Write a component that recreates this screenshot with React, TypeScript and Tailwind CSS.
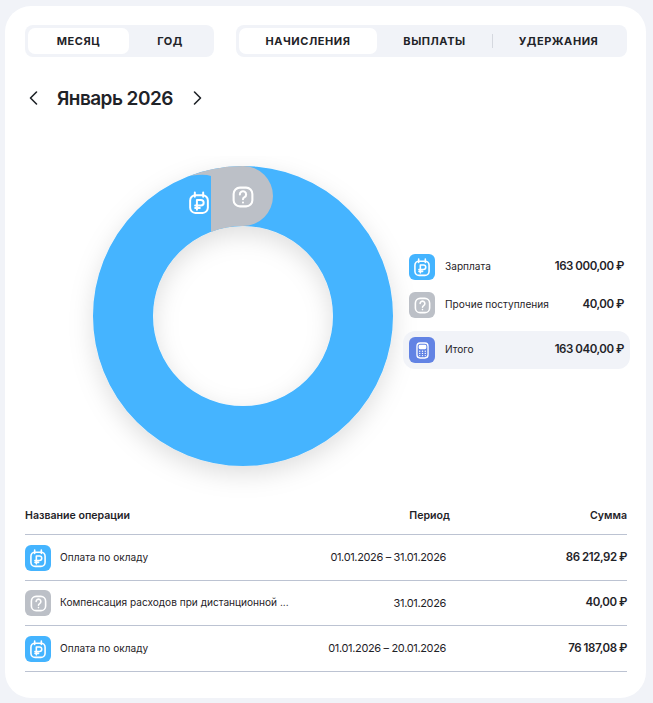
const F = `font-['Inter','Liberation_Sans',sans-serif]`;
type G = React.SVGProps<SVGSVGElement>;
import React from "react";
function SalaryGlyph(p: G) {
  return (
    <svg viewBox="0 0 24 24" fill="none" stroke="white" strokeWidth="1.9" strokeLinecap="round" strokeLinejoin="round" {...p}>
      <rect x="3.5" y="5" width="17" height="17" rx="5" />
      <path d="M8 2.5V6.5M16 2.5V6.5" />
      <path d="M10 19V9.5H13.8a2.7 2.7 0 0 1 0 5.4H8.3M8.3 17.2H12.8" />
    </svg>
  );
}
function HelpGlyph(p: G) {
  return (
    <svg viewBox="0 0 24 24" fill="none" stroke="white" strokeWidth="2" strokeLinecap="round" strokeLinejoin="round" {...p}>
      <rect x="3" y="3" width="18" height="18" rx="6" />
      <path d="M9 9.5a3 3 0 1 1 4.5 2.6c-1 .6-1.5 1-1.5 2" />
      <path d="M12 17.2v.01" />
    </svg>
  );
}
function CalcGlyph(p: G) {
  return (
    <svg viewBox="0 0 24 24" fill="none" stroke="white" strokeWidth="1.7" strokeLinecap="round" strokeLinejoin="round" {...p}>
      <rect x="5" y="2.5" width="14" height="19" rx="4" />
      <rect x="8" y="5.5" width="8" height="4" rx="1" fill="white" />
      <path d="M8.5 13v.01M12 13v.01M15.5 13v.01M8.5 15.7v.01M12 15.7v.01M15.5 15.7v.01M8.5 18.4v.01M12 18.4v.01M15.5 18.4v.01" />
    </svg>
  );
}
function Badge({ kind }: { kind: "salary" | "help" | "calc" }) {
  const bg = kind === "salary" ? "bg-[#44b4ff]" : kind === "help" ? "bg-[#bcc0c7]" : "bg-[#6283e4]";
  return (
    <div className={`flex h-[26px] w-[26px] shrink-0 items-center justify-center rounded-[6px] ${bg}`}>
      {kind === "salary" && <SalaryGlyph className="h-[20px] w-[20px]" />}
      {kind === "help" && <HelpGlyph className="h-[19px] w-[19px]" />}
      {kind === "calc" && <CalcGlyph className="h-[19px] w-[19px]" />}
    </div>
  );
}
function Donut() {
  return (
    <svg viewBox="-30 -10 360 350" className="-ml-[30px] h-[350px] w-[360px] shrink-0">
      <defs>
        <filter id="sh" x="-50%" y="-50%" width="200%" height="200%">
          <feDropShadow dx="0" dy="8" stdDeviation="12" floodColor="#000" floodOpacity="0.13" />
        </filter>
      </defs>
      <circle cx="150" cy="150" r="120" fill="none" stroke="#44b4ff" strokeWidth="60" filter="url(#sh)" />
      <path d="M118 3.45 A150 150 0 0 1 150 0 A30 30 0 0 1 150 60 A90 90 0 0 0 118 65.9 Z" fill="#bcc0c7" />
      <path d="M97 9.7 A150 150 0 0 1 118 3.45 L118 10 Q112 7.5 97 9.7 Z" fill="#bcc0c7" />
      <SalaryGlyph x="93.5" y="24" width="25" height="25" />
      <HelpGlyph x="137.5" y="18.5" width="25" height="25" />
    </svg>
  );
}
function Segment({ children, active }: { children: string; active?: boolean }) {
  return (
    <div className={`flex h-[26px] items-center justify-center rounded-[7px] text-[11px] font-bold tracking-[0.55px] text-[#1f2328] ${active ? "bg-white" : ""}`}>
      {children}
    </div>
  );
}
const num = "text-[11.5px] font-semibold tracking-[-0.45px] whitespace-nowrap";
const rows = [
  { k: "salary" as const, name: "Оплата по окладу", period: "01.01.2026 – 31.01.2026", sum: "86 212,92 ₽", h: "h-[46px]" },
  { k: "help" as const, name: "Компенсация расходов при дистанционной ...", period: "31.01.2026", sum: "40,00 ₽", h: "h-[45px]" },
  { k: "salary" as const, name: "Оплата по окладу", period: "01.01.2026 – 20.01.2026", sum: "76 187,08 ₽", h: "h-[46px]" },
];
export default function App() {
  return (
    <div className={`h-[703px] w-[653px] overflow-hidden bg-[#f1f3f8] pl-[5px] pr-[7px] pt-[6px] ${F}`}>
      <div className="h-[692px] rounded-[26px] bg-white pl-[20px] pr-[19px] pt-[19px] text-[#1f2328]">
        <div className="flex gap-[22px]">
          <div className="grid h-[32px] w-[189px] grid-cols-[101px_1fr] rounded-[8px] bg-[#f1f3f8] p-[3px]">
            <Segment active>МЕСЯЦ</Segment>
            <Segment>ГОД</Segment>
          </div>
          <div className="flex h-[32px] flex-1 rounded-[8px] bg-[#f1f3f8] p-[3px]">
            <div className="w-[138px]"><Segment active>НАЧИСЛЕНИЯ</Segment></div>
            <div className="w-[115px]"><Segment>ВЫПЛАТЫ</Segment></div>
            <div className="my-[6px] w-px bg-[#d5d8df]" />
            <div className="flex-1"><Segment>УДЕРЖАНИЯ</Segment></div>
          </div>
        </div>
        <div className="mt-[23px] flex h-[36px] items-center">
          <svg viewBox="0 0 12 16" fill="none" stroke="#1f2328" strokeWidth="1.6" strokeLinecap="round" strokeLinejoin="round" className="ml-[2px] h-[16px] w-[12px]"><path d="M9.5 2 3.5 8l6 6" /></svg>
          <div className="ml-[18px] text-[19px] font-semibold leading-none tracking-[-0.55px]">Январь 2026</div>
          <svg viewBox="0 0 12 16" fill="none" stroke="#1f2328" strokeWidth="1.6" strokeLinecap="round" strokeLinejoin="round" className="ml-[19px] h-[16px] w-[12px]"><path d="M2.5 2l6 6-6 6" /></svg>
        </div>
        <div className="mt-[40px] flex h-[345px] pl-[68px]">
          <Donut />
          <div className="-ml-[20px] mt-[92px] w-[227px] shrink-0 text-[10.1px]">
            <div className="flex h-[38px] items-center px-[6px]">
              <Badge kind="salary" />
              <span className="ml-[10px] flex-1">Зарплата</span>
              <span className={num}>163 000,00 ₽</span>
            </div>
            <div className="flex h-[38px] items-center px-[6px]">
              <Badge kind="help" />
              <span className="ml-[10px] flex-1">Прочие поступления</span>
              <span className={num}>40,00 ₽</span>
            </div>
            <div className="mt-[7px] flex h-[38px] items-center rounded-[12px] bg-[#f1f3f8] px-[6px]">
              <Badge kind="calc" />
              <span className="ml-[10px] flex-1">Итого</span>
              <span className={num}>163 040,00 ₽</span>
            </div>
          </div>
        </div>
        <div className="mt-[4px]">
          <div className="flex h-[30px] items-start border-b border-[#bcc3d2] pt-[3px] text-[10.6px] font-semibold">
            <div className="flex-1">Название операции</div>
            <div className="w-[100px] text-right">Период</div>
            <div className="w-[177px] text-right">Сумма</div>
          </div>
          {rows.map((x, i) => (
            <div key={i} className={`flex items-center border-b border-[#bcc3d2] ${x.h}`}>
              <Badge kind={x.k} />
              <div className="ml-[9px] w-[238px] whitespace-nowrap text-[10.1px]">{x.name}</div>
              <div className="w-[148px] whitespace-nowrap text-right text-[11px] tracking-[-0.35px]">{x.period}</div>
              <div className={`flex-1 text-right ${num}`}>{x.sum}</div>
            </div>
          ))}
        </div>
      </div>
    </div>
  );
}
